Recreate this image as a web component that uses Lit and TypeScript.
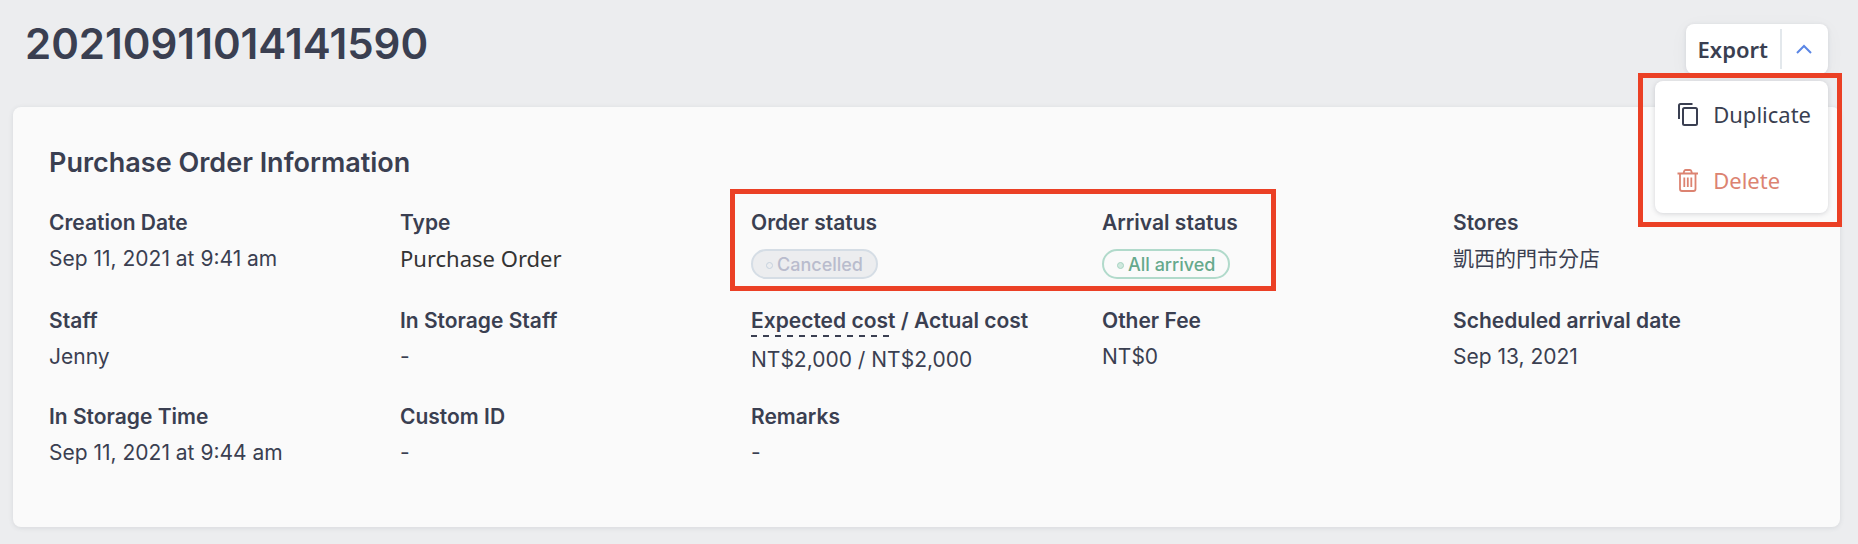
import { LitElement, html, css, nothing } from "lit";
import { customElement, property, state } from "lit/decorators.js";

const copyIcon = html`<svg class="icon" viewBox="0 0 24 24" width="24" height="24" fill="none" stroke="currentColor" stroke-width="2" aria-hidden="true">
  <path d="M3 17V3.5Q3 2 4.5 2H16.5" />
  <rect x="7" y="6" width="14" height="17" rx="1.5" />
</svg>`;

const trashIcon = html`<svg class="icon" viewBox="0 0 24 24" width="24" height="24" fill="none" stroke="currentColor" stroke-width="1.8" aria-hidden="true">
  <path d="M1.5 5.5H22M7.5 5.5L8.2 3Q8.5 2 9.6 2H13.9Q15 2 15.3 3L16 5.5M4 5.5V21Q4 23 6 23H17.5Q19.5 23 19.5 21V5.5" />
  <path d="M8.3 9.5V19M11.8 9.5V19M15.3 9.5V19" />
</svg>`;

@customElement("status-badge")
export class StatusBadge extends LitElement {
  @property({ reflect: true }) tone = "muted";

  static styles = css`
    :host {
      display: inline-flex;
      align-items: center;
      gap: 4px;
      box-sizing: border-box;
      height: 30px;
      padding: 2px 13px 0;
      border: 2px solid #d5dde5;
      border-radius: 15px;
      background: #ecedef;
      color: #b9bccd;
      font-size: 18px;
      font-weight: 500;
      line-height: 24px;
    }
    .dot {
      box-sizing: border-box;
      width: 7px;
      height: 7px;
      border: 1px solid #c6d2de;
      border-radius: 50%;
    }
    :host([tone="success"]) {
      border-color: #b1dacb;
      background: #fafafa;
      color: #66a98c;
    }
    :host([tone="success"]) .dot {
      border-color: #a5d3c1;
      background: #cfe8de;
    }
  `;

  render() {
    return html`<span class="dot"></span><slot></slot>`;
  }
}

@customElement("export-menu")
export class ExportMenu extends LitElement {
  @state() private open = true;

  static styles = css`
    :host {
      position: relative;
      display: block;
    }
    button {
      margin: 0;
      padding: 0;
      border: 0;
      background: none;
      color: inherit;
      font: inherit;
      cursor: pointer;
    }
    .split {
      display: flex;
      align-items: center;
      height: 50px;
      border-radius: 8px;
      background: #fff;
      box-shadow: 0 1px 4px rgba(58, 63, 81, 0.12), 0 4px 20px rgba(58, 63, 81, 0.04);
      font: 600 22px/50px "Noto Sans", sans-serif;
    }
    .export {
      height: 50px;
      padding: 0 12px;
    }
    .toggle {
      display: flex;
      align-items: center;
      justify-content: center;
      width: 48px;
      height: 40px;
      padding-right: 2px;
      border-left: 2px solid #e3e8ec;
      color: #5b86e5;
    }
    .menu {
      position: absolute;
      z-index: 1;
      top: 57px;
      right: 0;
      border-radius: 8px;
      background: #fff;
      box-shadow: 0 1px 5px rgba(58, 63, 81, 0.2);
      font: 400 22px/66px "Noto Sans", sans-serif;
    }
    .item {
      display: flex;
      align-items: center;
      gap: 13px;
      width: 100%;
      height: 66px;
      padding: 0 17px 0 21px;
    }
    .danger {
      color: #dc8371;
    }
    .mark {
      position: absolute;
      inset: -8px -14px -14px -17px;
      border: 5px solid #eb4025;
      pointer-events: none;
    }
  `;

  render() {
    return html`
      <div class="split">
        <button class="export" type="button">Export</button>
        <button class="toggle" type="button" aria-label="More actions" aria-expanded=${this.open}
          @click=${() => (this.open = !this.open)}>
          <svg width="18" height="12" viewBox="0 0 18 12" fill="none" stroke="currentColor" stroke-width="2" aria-hidden="true">
            <path d="M2 10L9 3L16 10" />
          </svg>
        </button>
      </div>
      ${this.open
        ? html`<div class="menu">
            <button class="item" type="button">${copyIcon}<span>Duplicate</span></button>
            <button class="item danger" type="button">${trashIcon}<span>Delete</span></button>
            <div class="mark"></div>
          </div>`
        : nothing}
    `;
  }
}

@customElement("app-root")
export class AppRoot extends LitElement {
  static styles = css`
    :host {
      display: block;
      box-sizing: border-box;
      min-height: 100vh;
      padding: 24px 18px 17px 13px;
      background: #ecedef;
      color: #3a3f51;
      font-family: Inter, "Noto Sans CJK TC", sans-serif;
    }
    .header {
      display: flex;
      align-items: flex-start;
      justify-content: space-between;
      height: 83px;
      padding: 0 12px;
    }
    h1 {
      margin: 0;
      font-size: 42px;
      font-weight: 600;
      line-height: 40px;
    }
    .card {
      padding: 40px 36px 61px;
      border-radius: 8px;
      background: #fafafa;
      box-shadow: 0 1px 5px rgba(58, 63, 81, 0.12);
    }
    h2 {
      margin: 0 0 31px;
      font-size: 27px;
      font-weight: 600;
      line-height: 32px;
    }
    .fields {
      position: relative;
      display: grid;
      grid-template-columns: repeat(5, minmax(0, 1fr));
      row-gap: 29px;
      margin: 0;
      font-size: 21px;
      line-height: 26px;
    }
    dt {
      margin: 0 0 10px;
      font-weight: 600;
    }
    dd {
      margin: 0;
    }
    .status dd {
      display: flex;
      margin-top: 13px;
    }
    .cost dd {
      padding-bottom: 2px;
    }
    .plain dd {
      color: #333;
      font-family: "Noto Sans", sans-serif;
      font-size: 22px;
      line-height: 24px;
    }
    .hint {
      display: inline-block;
      padding-bottom: 3px;
      background: repeating-linear-gradient(90deg, #3a3f51 0 6px, transparent 6px 12px) bottom / 100% 2px no-repeat;
    }
    .mark {
      position: absolute;
      grid-area: 1 / 3 / 2 / 5;
      inset: -21px 177px -12px -21px;
      border: 5px solid #eb4025;
      pointer-events: none;
    }
  `;

  private field(label: unknown, value: unknown, kind = "") {
    return html`<div class=${kind}><dt>${label}</dt><dd>${value}</dd></div>`;
  }

  render() {
    return html`
      <header class="header">
        <h1>20210911014141590</h1>
        <export-menu></export-menu>
      </header>
      <section class="card">
        <h2>Purchase Order Information</h2>
        <dl class="fields">
          ${this.field("Creation Date", "Sep 11, 2021 at 9:41 am")}
          ${this.field("Type", "Purchase Order", "plain")}
          ${this.field("Order status", html`<status-badge>Cancelled</status-badge>`, "status")}
          ${this.field("Arrival status", html`<status-badge tone="success">All arrived</status-badge>`, "status")}
          ${this.field("Stores", "凱西的門市分店")}
          ${this.field("Staff", "Jenny")}
          ${this.field("In Storage Staff", "-")}
          ${this.field(html`<span class="hint">Expected cost</span> / Actual cost`, "NT$2,000 / NT$2,000", "cost")}
          ${this.field("Other Fee", "NT$0")}
          ${this.field("Scheduled arrival date", "Sep 13, 2021")}
          ${this.field("In Storage Time", "Sep 11, 2021 at 9:44 am")}
          ${this.field("Custom ID", "-")}
          ${this.field("Remarks", "-")}
          <div class="mark"></div>
        </dl>
      </section>
    `;
  }
}
